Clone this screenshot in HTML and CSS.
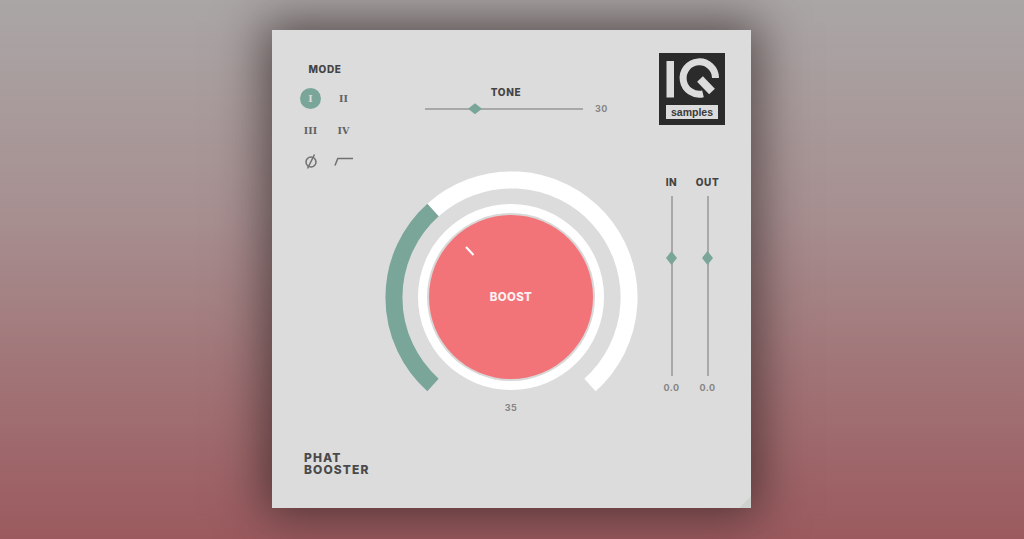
FILE: index.html
```html
<!DOCTYPE html>
<html lang="en">
<head>
    <meta charset="UTF-8">
    <title>Phat Booster</title>
    <link rel="stylesheet" href="styles.css">
</head>
<body>
    <div class="panel">

        <!-- Mode buttons -->
        <div class="mode">
            <div class="heading mode-title">MODE</div>
            <div class="mode-grid">
                <span class="numeral"><span class="active">I</span></span>
                <span class="numeral">II</span>
                <span class="numeral">III</span>
                <span class="numeral">IV</span>
                <span class="phase">
                    <svg width="16" height="18" viewBox="0 0 16 18">
                        <circle cx="8" cy="9" r="5" class="icon-line"/>
                        <path d="M11.500 1.500 4.500 15.500" class="icon-line"/>
                    </svg>
                </span>
                <span class="phase">
                    <svg width="20" height="12" viewBox="0 0 20 12">
                        <path d="M1 9.500 3.800 2.500H19" class="icon-line"/>
                    </svg>
                </span>
            </div>
        </div>

        <!-- Tone slider -->
        <div class="tone">
            <div class="heading tone-title">TONE</div>
            <div class="tone-row">
                <div class="tone-track"><span class="thumb-h"></span></div>
                <span class="value">30</span>
            </div>
        </div>

        <!-- Logo -->
        <div class="logo">
            <svg width="66" height="72" viewBox="0 0 66 72">
                <rect width="66" height="72" fill="#2b2b2b"/>
                <rect x="7.500" y="8" width="7.500" height="36.500" fill="#dcdcdc"/>
                <path d="M56.500 25A16.200 16.200 0 1 0 44 40.800" fill="none" stroke="#dcdcdc" stroke-width="7"/>
                <path d="M41 26 53 38.500" fill="none" stroke="#dcdcdc" stroke-width="8"/>
            </svg>
            <span class="logo-label">samples</span>
        </div>

        <!-- Boost knob -->
        <div class="knob">
            <svg width="254" height="254" viewBox="0 0 254 254">
                <path d="M206 215A117.500 117.500 0 1 0 49 40" fill="none" stroke="#fff" stroke-width="17"/>
                <path d="M49 215A117.500 117.500 0 0 1 49 40" fill="none" stroke="#7aa69a" stroke-width="17"/>
                <circle cx="127" cy="127" r="93" fill="#fff"/>
                <circle cx="127" cy="127" r="84" fill="#d8d8d8"/>
                <circle cx="127" cy="127" r="82" fill="#f27479"/>
                <path d="M82 77 89.500 85" stroke="#fff" stroke-width="2" fill="none"/>
                <text x="127" y="131" class="boost-text">BOOST</text>
                <text x="127" y="241" class="value-text">35</text>
            </svg>
        </div>

        <!-- In / out faders -->
        <div class="faders">
            <div class="fader">
                <div class="heading">IN</div>
                <div class="fader-track"><span class="thumb-v"></span></div>
                <span class="value">0.0</span>
            </div>
            <div class="fader">
                <div class="heading">OUT</div>
                <div class="fader-track"><span class="thumb-v"></span></div>
                <span class="value">0.0</span>
            </div>
        </div>

        <div class="title">PHAT<br>BOOSTER</div>
        <span class="corner"></span>
    </div>
</body>
</html>
```

FILE: styles.css
```css
body {
    margin: 0;
    height: 539px;
    overflow: hidden;
    font-family: "Inter", "Liberation Sans", sans-serif;
    background: linear-gradient(#aaa6a6 0%, #a78f90 40%, #a06f72 75%, #9b5a5e 100%);
}

.panel {
    position: relative;
    width: 479px;
    height: 478px;
    margin: 30px 0 0 272px;
    display: grid;
    grid-template-columns: 112px 254px 113px;
    grid-template-rows: 140px 254px 1fr;
    background: #dcdcdc;
    box-shadow: 0 0 45px 8px rgba(35, 25, 25, 0.62);
}

.heading {
    font-size: 10px;
    font-weight: 800;
    letter-spacing: 0.6px;
    line-height: 12px;
    color: #444;
    text-align: center;
}

.value {
    font-size: 9px;
    font-weight: 700;
    letter-spacing: 0.5px;
    line-height: 12px;
    color: #858585;
}

/* mode */
.mode {
    padding: 33px 0 0 22px;
}

.mode-title {
    width: 66px;
    margin-left: -2px;
}

.mode-grid {
    display: grid;
    grid-template-columns: 33px 33px;
    grid-auto-rows: 32px;
    margin-top: 7px;
}

.numeral, .phase {
    display: flex;
    align-items: center;
    justify-content: center;
}

.numeral {
    font-family: "DejaVu Serif", "Liberation Serif", serif;
    font-size: 9.500px;
    font-weight: 700;
    color: #636363;
}

.active {
    display: flex;
    align-items: center;
    justify-content: center;
    width: 21px;
    height: 21px;
    border-radius: 50%;
    background: #7aa69a;
    color: #dcdcdc;
}

.icon-line {
    fill: none;
    stroke: #707070;
    stroke-width: 1.500;
}

/* tone */
.tone {
    padding: 56px 0 0 41px;
}

.tone-title {
    width: 162px;
}

.tone-row {
    display: flex;
    align-items: center;
    gap: 12px;
    margin-top: 5px;
}

.tone-track {
    position: relative;
    width: 158px;
    height: 1.500px;
    background: #a8a8a8;
}

.thumb-h {
    position: absolute;
    left: 43px;
    top: -5px;
    width: 14px;
    height: 11px;
    background: #7aa69a;
    clip-path: polygon(50% 0, 100% 50%, 50% 100%, 0 50%);
}

/* logo */
.logo {
    position: relative;
    justify-self: start;
    width: 66px;
    height: 72px;
    margin: 23px 0 0 21px;
}

.logo svg {
    display: block;
}

.logo-label {
    position: absolute;
    left: 7px;
    top: 52px;
    width: 52px;
    height: 14px;
    background: #dcdcdc;
    font-family: "Liberation Sans", Arial, sans-serif;
    font-size: 10.500px;
    font-weight: 700;
    line-height: 14px;
    text-align: center;
    color: #3a3a3a;
}

/* knob */
.knob {
    grid-column: 2;
}

.knob svg {
    display: block;
}

.boost-text {
    font-family: "Inter", "Liberation Sans", sans-serif;
    font-size: 11.500px;
    font-weight: 800;
    letter-spacing: 0.3px;
    text-anchor: middle;
    fill: #fdf0f0;
}

.value-text {
    font-family: "Inter", "Liberation Sans", sans-serif;
    font-size: 9px;
    font-weight: 700;
    letter-spacing: 0.5px;
    text-anchor: middle;
    fill: #858585;
}

/* faders */
.faders {
    grid-column: 3;
    display: flex;
    margin: 6px 0 0 15.500px;
}

.fader {
    display: flex;
    flex-direction: column;
    align-items: center;
    width: 36px;
}

.fader-track {
    position: relative;
    flex: none;
    width: 2px;
    height: 180px;
    margin: 8px 0 6px;
    background: #a8a8a8;
}

.thumb-v {
    position: absolute;
    left: -4.500px;
    top: 55px;
    width: 11px;
    height: 14px;
    background: #7aa69a;
    clip-path: polygon(50% 0, 100% 50%, 50% 100%, 0 50%);
}

/* title */
.title {
    grid-column: 1 / 3;
    padding: 28px 0 0 32px;
    font-size: 12px;
    font-weight: 800;
    letter-spacing: 1.100px;
    line-height: 12px;
    color: #4a4a4a;
}

.corner {
    position: absolute;
    right: 0;
    bottom: 0;
    width: 12px;
    height: 12px;
    background: #cfd3d0;
    clip-path: polygon(100% 0, 100% 100%, 0 100%);
}
```
